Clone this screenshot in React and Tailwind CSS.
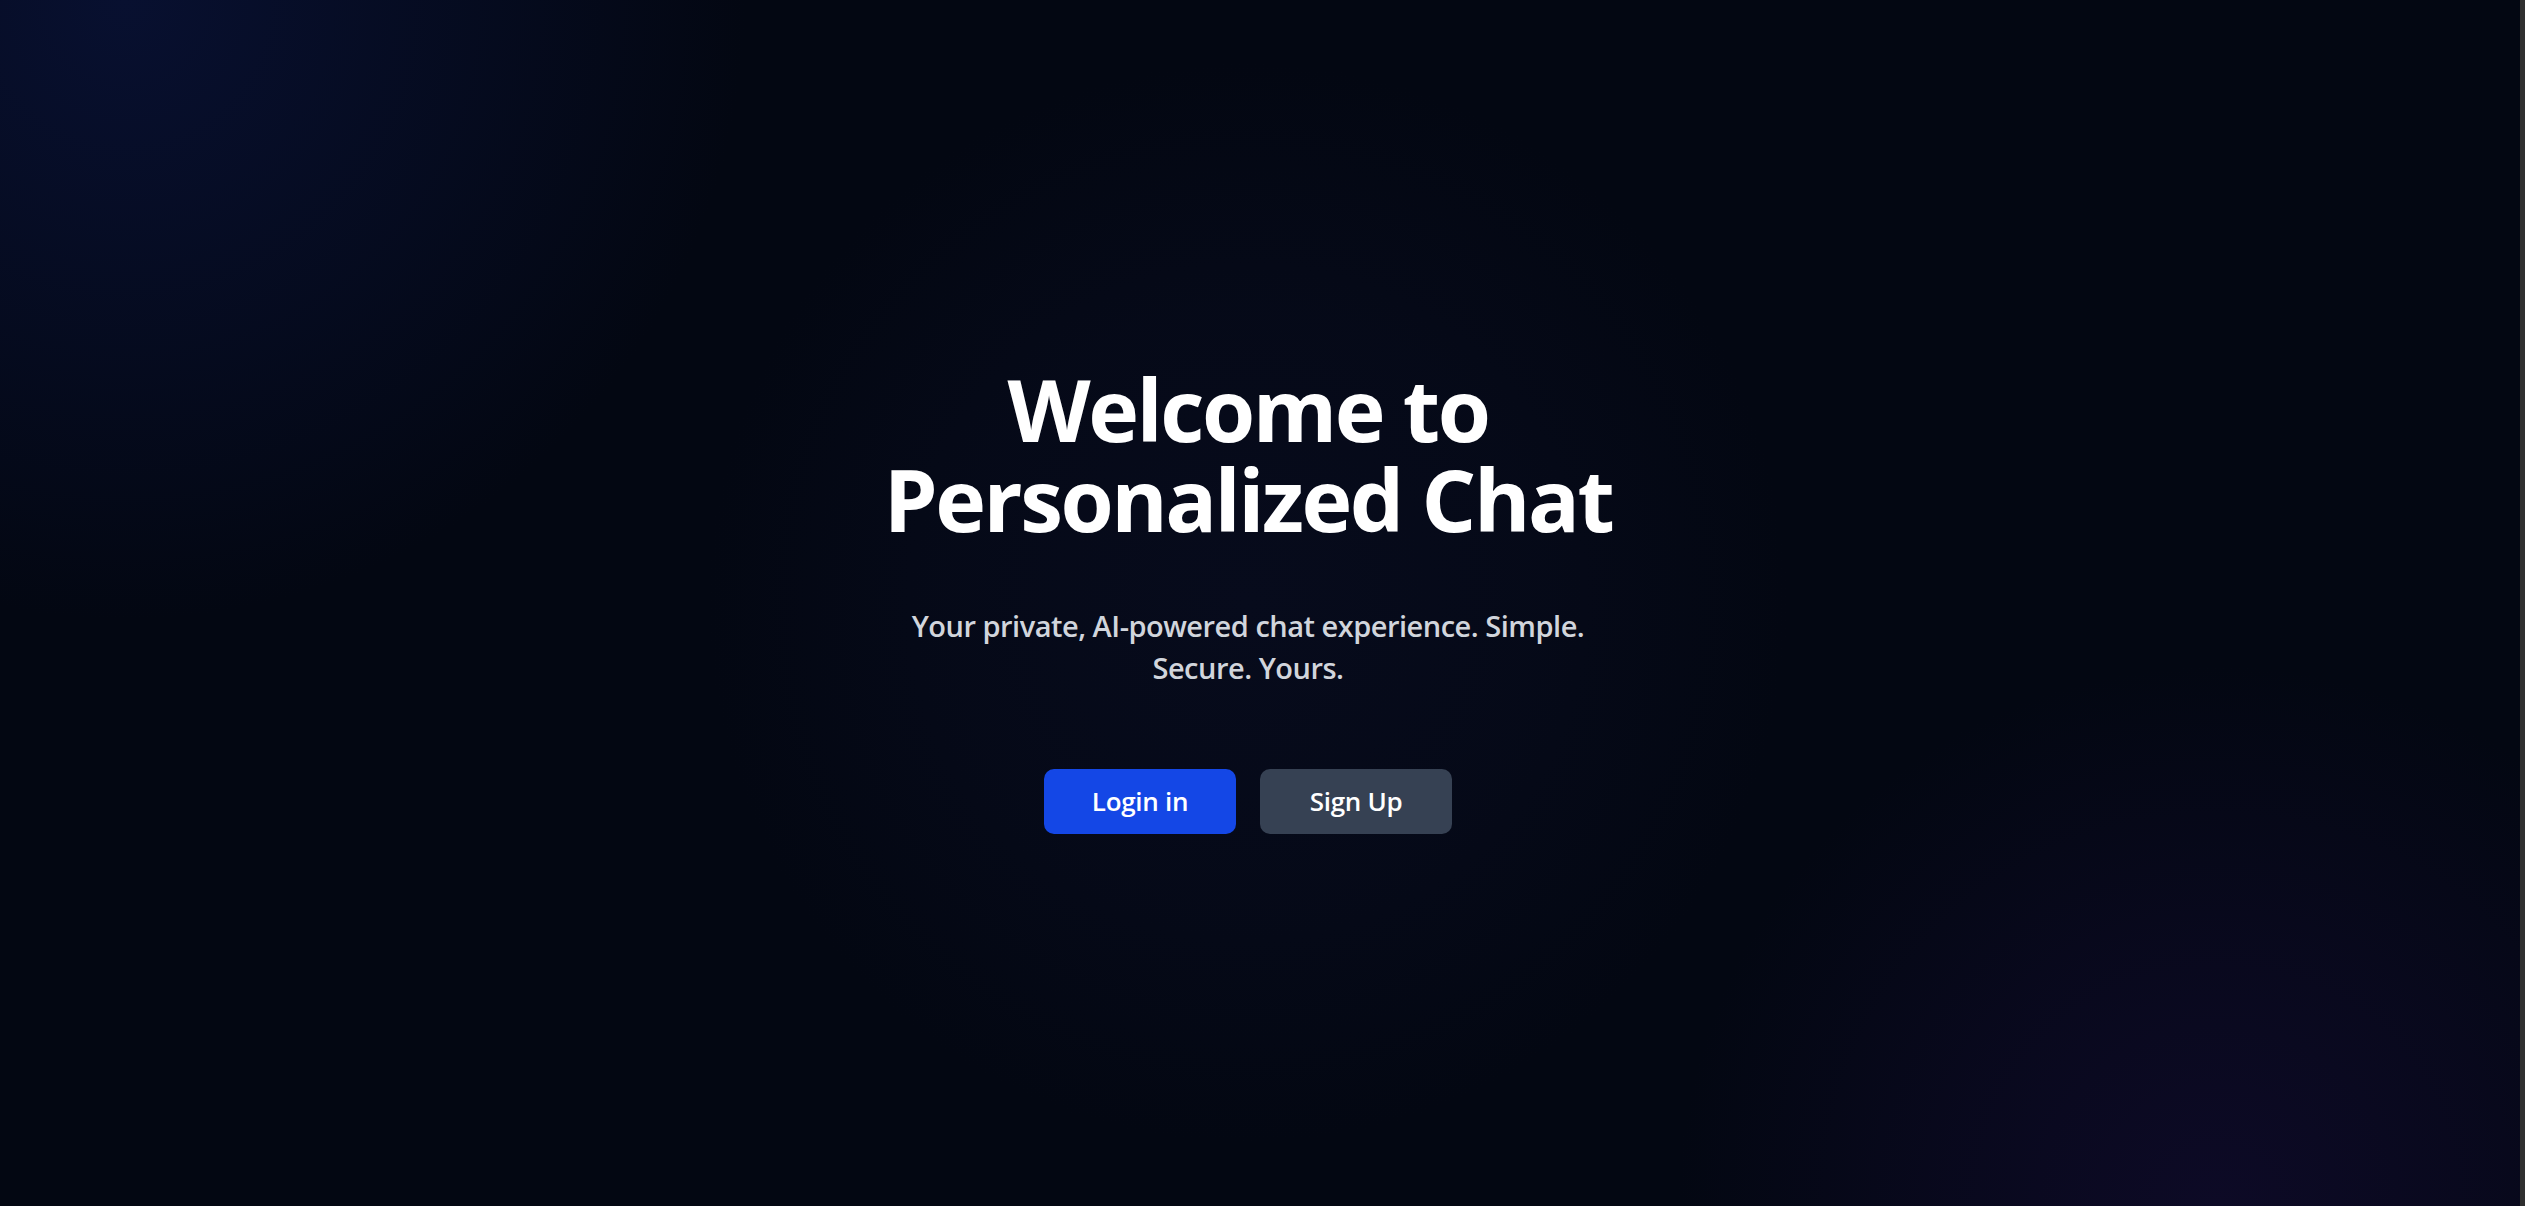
export default function App() {
  return (
    <div className="flex h-[1206px] w-full overflow-hidden bg-[#030712] font-['Open_Sans',_'Noto_Sans',_sans-serif]">
      <main className="relative flex flex-1 items-center justify-center pr-6 bg-[radial-gradient(circle_620px_at_5%_0%,#081030_0%,rgba(8,16,48,0.55)_45%,transparent_100%),radial-gradient(circle_540px_at_88%_100%,#0d0a26_0%,rgba(13,10,38,0.55)_50%,transparent_100%),radial-gradient(circle_540px_at_49.5%_50%,#070b1c_0%,rgba(7,11,28,0.6)_55%,transparent_100%)]">
        <div className="flex max-w-[960px] flex-col items-center pb-[8px] text-center">
          <h1 className="text-[86px] font-bold leading-[90px] tracking-[-2.5px] text-white">
            Welcome to
            <br />
            Personalized Chat
          </h1>
          <p className="mt-[61px] max-w-[820px] text-[29px] font-semibold leading-[42px] tracking-[-0.5px] text-gray-300">
            Your private, AI-powered chat experience. Simple.
            <br />
            Secure. Yours.
          </p>
          <div className="mt-[80px] flex gap-[24px]">
            <button className="h-[65px] w-[192px] rounded-[10px] bg-blue-700 text-[26px] font-semibold tracking-[-0.3px] text-white">
              Login in
            </button>
            <button className="h-[65px] w-[192px] rounded-[10px] bg-gray-700 text-[26px] font-semibold tracking-[-0.3px] text-white">
              Sign Up
            </button>
          </div>
        </div>
      </main>
      <div className="w-[5px] bg-[#2f2f2f]" />
    </div>
  );
}
